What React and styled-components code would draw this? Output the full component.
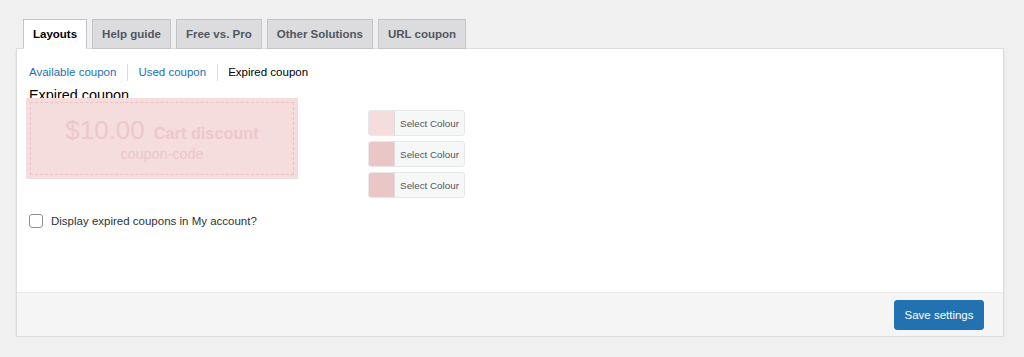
import React, { useState } from 'react';
import styled, { createGlobalStyle } from 'styled-components';

const GlobalStyle = createGlobalStyle`
  html, body {
    margin: 0;
    padding: 0;
    background: #f0f0f1;
    font-family: "Liberation Sans", Arial, sans-serif;
    color: #1d2327;
  }
`;

const tabs = ['Layouts', 'Help guide', 'Free vs. Pro', 'Other Solutions', 'URL coupon'];
const subLinks = ['Available coupon', 'Used coupon', 'Expired coupon'];
const swatches = ['#f5dcdd', '#ebc6c7', '#ebc6c7'];

const Page = styled.div`
  padding: 19px 20px 0 16px;
`;

const TabBar = styled.nav`
  display: flex;
  gap: 5px;
  padding-left: 7px;
  margin-bottom: -1px;
  position: relative;
  z-index: 1;
`;

const Tab = styled.button`
  height: 30px;
  padding: 0 9px;
  font-family: inherit;
  font-size: 11.5px;
  font-weight: bold;
  color: ${(p) => (p.active ? '#000' : '#50575e')};
  background: ${(p) => (p.active ? '#fff' : '#dcdcde')};
  border: 1px solid #c3c4c7;
  border-bottom-color: ${(p) => (p.active ? '#fff' : '#c3c4c7')};
  cursor: pointer;
`;

const Panel = styled.section`
  background: #fff;
  border: 1px solid #dcdcde;
  box-shadow: 0 2px 2px rgba(0, 0, 0, 0.1);
`;

const Content = styled.div`
  height: 243px;
  box-sizing: border-box;
  padding: 15px 12px 0;
`;

const SubNav = styled.div`
  display: flex;
  align-items: center;
  height: 17px;
`;

const SubLink = styled.a`
  font-size: 11.5px;
  color: ${(p) => (p.current ? '#000' : '#2271b1')};
  text-decoration: none;
  padding: 0 11px;
  line-height: 17px;
  border-left: ${(p) => (p.first ? 'none' : '1px solid #dcdcde')};
  padding-left: ${(p) => (p.first ? '0' : '10px')};
  cursor: pointer;
`;

const Heading = styled.h3`
  margin: 6px 0 0;
  font-size: 14.4px;
  font-weight: normal;
  line-height: 16px;
  color: #000;
`;

const PreviewRow = styled.div`
  display: flex;
  align-items: flex-start;
  gap: 70px;
  margin-top: -5px;
  margin-left: -3px;
`;

const Coupon = styled.div`
  width: 272px;
  height: 81px;
  box-sizing: border-box;
  padding: 4px;
  background: #f5dcdd;
`;

const CouponInner = styled.div`
  height: 100%;
  box-sizing: border-box;
  border: 1px dashed #ebc4c6;
  display: flex;
  flex-direction: column;
  align-items: center;
  justify-content: center;
  color: #edc8ca;
`;

const Amount = styled.div`
  display: flex;
  align-items: baseline;
  gap: 9px;
  margin-top: 2px;
`;

const Price = styled.span`
  font-size: 26px;
  line-height: 28px;
`;

const Label = styled.span`
  font-size: 16.3px;
  font-weight: bold;
`;

const Code = styled.span`
  font-size: 14.4px;
  line-height: 18px;
  margin-top: 1px;
`;

const Pickers = styled.div`
  display: flex;
  flex-direction: column;
  gap: 5px;
  margin-top: 12px;
`;

const Picker = styled.button`
  display: flex;
  align-items: stretch;
  width: 97px;
  height: 26px;
  padding: 0;
  border: 1px solid #e6e7e8;
  border-radius: 3px;
  background: #f6f7f7;
  overflow: hidden;
  cursor: pointer;
`;

const Swatch = styled.span`
  width: 25px;
  background: ${(p) => p.color};
  border-right: 1px solid #dcdcde;
`;

const PickerText = styled.span`
  flex: 1;
  display: flex;
  align-items: center;
  justify-content: center;
  font-family: "Liberation Sans", Arial, sans-serif;
  font-size: 9.8px;
  color: #50575e;
`;

const CheckRow = styled.label`
  display: flex;
  align-items: center;
  gap: 8px;
  margin-top: 16px;
  font-size: 11.5px;
  color: #2c3338;
  cursor: pointer;
`;

const Check = styled.input`
  appearance: none;
  width: 14px;
  height: 14px;
  margin: 0;
  border: 1px solid #8c8f94;
  border-radius: 3px;
  background: #fff;
  &:checked {
    background: #2271b1;
    border-color: #2271b1;
  }
`;

const Footer = styled.div`
  display: flex;
  justify-content: flex-end;
  height: 44px;
  box-sizing: border-box;
  padding: 7px 19px 0;
  background: #f5f5f5;
  border-top: 1px solid #ececec;
`;

const SaveButton = styled.button`
  width: 90px;
  height: 30px;
  border: 1px solid #2271b1;
  border-radius: 3px;
  background: #2271b1;
  color: #fff;
  font-family: inherit;
  font-size: 11.5px;
  cursor: pointer;
`;

export default function App() {
  const [activeTab, setActiveTab] = useState('Layouts');
  const [showExpired, setShowExpired] = useState(false);

  return (
    <>
      <GlobalStyle />
      <Page>
        <TabBar>
          {tabs.map((t) => (
            <Tab key={t} active={t === activeTab} onClick={() => setActiveTab(t)}>
              {t}
            </Tab>
          ))}
        </TabBar>
        <Panel>
          <Content>
            <SubNav>
              {subLinks.map((l, i) => (
                <SubLink key={l} first={i === 0} current={i === 2}>
                  {l}
                </SubLink>
              ))}
            </SubNav>
            <Heading>Expired coupon</Heading>
            <PreviewRow>
              <Coupon>
                <CouponInner>
                  <Amount>
                    <Price>$10.00</Price>
                    <Label>Cart discount</Label>
                  </Amount>
                  <Code>coupon-code</Code>
                </CouponInner>
              </Coupon>
              <Pickers>
                {swatches.map((c, i) => (
                  <Picker key={i}>
                    <Swatch color={c} />
                    <PickerText>Select Colour</PickerText>
                  </Picker>
                ))}
              </Pickers>
            </PreviewRow>
            <CheckRow>
              <Check
                type="checkbox"
                checked={showExpired}
                onChange={(e) => setShowExpired(e.target.checked)}
              />
              Display expired coupons in My account?
            </CheckRow>
          </Content>
          <Footer>
            <SaveButton>Save settings</SaveButton>
          </Footer>
        </Panel>
      </Page>
    </>
  );
}
